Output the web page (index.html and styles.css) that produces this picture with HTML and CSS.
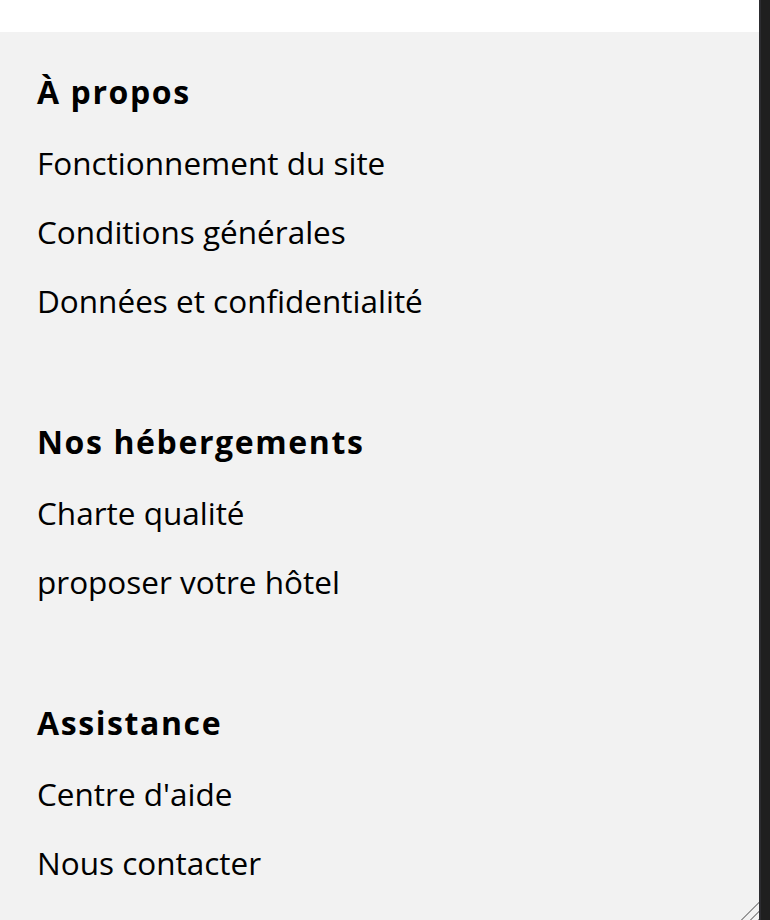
FILE: index.html
```html
<!DOCTYPE html>
<html lang="fr">
<head>
<meta charset="utf-8">
<title>Footer</title>
<link rel="stylesheet" href="styles.css">
</head>
<body>
<div class="frame">
  <div class="content">
    <div class="topbar"></div>
    <footer class="panel">
      <section class="group">
        <h2 class="group-title">À propos</h2>
        <ul class="links">
          <li><a href="#">Fonctionnement du site</a></li>
          <li><a href="#">Conditions générales</a></li>
          <li><a href="#">Données et confidentialité</a></li>
        </ul>
      </section>
      <section class="group">
        <h2 class="group-title">Nos hébergements</h2>
        <ul class="links">
          <li><a href="#">Charte qualité</a></li>
          <li><a href="#">proposer votre hôtel</a></li>
        </ul>
      </section>
      <section class="group">
        <h2 class="group-title">Assistance</h2>
        <ul class="links">
          <li><a href="#">Centre d'aide</a></li>
          <li><a href="#">Nous contacter</a></li>
        </ul>
      </section>
      <span class="grip" aria-hidden="true"></span>
    </footer>
  </div>
  <div class="scrollbar"></div>
</div>
</body>
</html>
```
FILE: styles.css
```css
html, body {
  margin: 0;
  padding: 0;
  height: 100%;
  overflow: hidden;
  background: #ffffff;
}
body {
  font-family: "Open Sans", "Noto Sans", sans-serif;
  color: #000;
}
.frame {
  display: flex;
  height: 920px;
}
.content {
  flex: 1;
  display: flex;
  flex-direction: column;
}
.topbar {
  height: 32px;
  background: #ffffff;
  flex: none;
}
.panel {
  position: relative;
  flex: 1;
  background: #f2f2f2;
  padding: 0 0 0 37px;
  overflow: hidden;
}
.group-title {
  margin: 0 0 16px;
  padding-top: 40px;
  font-size: 32px;
  font-weight: 700;
  letter-spacing: 1.6px;
  line-height: 40px;
}
.group + .group .group-title {
  padding-top: 87px;
}
.links {
  list-style: none;
  margin: 0;
  padding: 0;
}
.links li {
  font-size: 31.5px;
  line-height: 69px;
}
.links a {
  color: #000;
  text-decoration: none;
}
.scrollbar {
  width: 9px;
  flex: none;
  background: #1f1f1f;
  border-left: 2px solid #2c2c30;
}
.grip {
  position: absolute;
  right: 0;
  bottom: 0;
  width: 24px;
  height: 24px;
  background: repeating-linear-gradient(135deg, transparent 0 3px, #9a9a9a 3px 4.5px, transparent 4.5px 6px);
  clip-path: polygon(100% 0, 100% 100%, 0 100%);
}
```
